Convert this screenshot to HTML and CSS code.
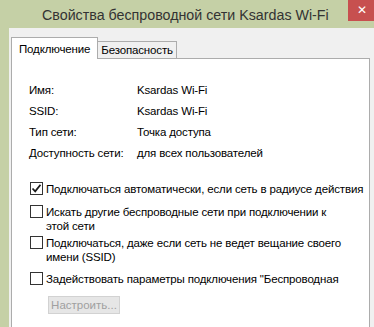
FILE: index.html
```html
<!DOCTYPE html>
<html lang="ru">
<head>
  <meta charset="UTF-8">
  <meta name="viewport" content="width=device-width, initial-scale=1.0">
  <title>Свойства беспроводной сети Ksardas Wi-Fi</title>
  <link rel="stylesheet" href="styles.css">
</head>
<body>
  <div class="window">
    <div class="titlebar">
      <span class="title">Свойства беспроводной сети Ksardas Wi-Fi</span>
      <span class="close">&#x2715;</span>
    </div>
    <div class="client">
      <div class="tabs">
        <div class="tab active">Подключение</div>
        <div class="tab">Безопасность</div>
      </div>
      <div class="panel">
        <div class="info">
          <span>Имя:</span><span>Ksardas Wi-Fi</span>
          <span>SSID:</span><span>Ksardas Wi-Fi</span>
          <span>Тип сети:</span><span>Точка доступа</span>
          <span>Доступность сети:</span><span>для всех пользователей</span>
        </div>

        <div class="check row1">
          <span class="box">
            <svg width="11" height="11" viewBox="0 0 11 11"><path d="M1.5 5.5 L4.2 8.3 L9.5 1.8" fill="none" stroke="#1a1a1a" stroke-width="1.8"/></svg>
          </span>
          <span class="label">Подключаться автоматически, если сеть в радиусе действия</span>
        </div>
        <div class="check row2">
          <span class="box"></span>
          <span class="label">Искать другие беспроводные сети при подключении к<br>этой сети</span>
        </div>
        <div class="check row3">
          <span class="box"></span>
          <span class="label">Подключаться, даже если сеть не ведет вещание своего<br>имени (SSID)</span>
        </div>
        <div class="check row4">
          <span class="box"></span>
          <span class="label">Задействовать параметры подключения "Беспроводная</span>
        </div>
        <button type="button" class="setup" disabled>Настроить...</button>
      </div>
    </div>
  </div>
</body>
</html>
```

FILE: styles.css
```css
body {
  margin: 0;
  padding: 0;
  background-color: #c5d0a6;
  font-family: "Liberation Sans", Arial, sans-serif;
  font-size: 11.5px;
  letter-spacing: -0.15px;
  color: #000;
  overflow: hidden;
}

.window {
  width: 374px;
  height: 327px;
  display: flex;
  flex-direction: column;
}

.titlebar {
  height: 28px;
  display: flex;
  align-items: flex-start;
}

.title {
  padding-left: 42px;
  padding-top: 5px;
  font-size: 14.25px;
  letter-spacing: 0;
  line-height: 20px;
  color: #333;
}

.close {
  margin-left: auto;
  width: 26px;
  height: 21px;
  background-color: #c7504f;
  color: #fff;
  font-size: 12px;
  line-height: 21px;
  text-align: center;
  padding-left: 2px;
  box-sizing: border-box;
}

.client {
  flex: 1;
  margin-left: 9px;
  background-color: #f0f0f0;
  padding: 9px 0 0 2px;
  display: flex;
  flex-direction: column;
}

.tabs {
  display: flex;
  align-items: flex-end;
}

.tab {
  height: 16px;
  line-height: 16px;
  padding: 0 3px;
  border: 1px solid #acacac;
  border-left: none;
  border-bottom: none;
  background-color: #f0f0f0;
}

.tab.active {
  height: 21px;
  line-height: 22px;
  padding: 0 7px;
  border-left: 1px solid #acacac;
  background-color: #fff;
  margin-bottom: -1px;
  position: relative;
  z-index: 1;
}

.panel {
  flex: 1;
  width: 359px;
  border: 1px solid #acacac;
  border-bottom: none;
  background-color: #fff;
  padding: 21px 0 0 17px;
  box-sizing: border-box;
}

.info {
  display: grid;
  grid-template-columns: 108px auto;
  line-height: 21px;
}

.check {
  display: flex;
  align-items: flex-start;
  gap: 3px;
  line-height: 14px;
  margin-left: 1px;
}

.row1 { margin-top: 18px; }
.row2 { margin-top: 9px; }
.row3 { margin-top: 3px; }
.row4 { margin-top: 8px; }

.box {
  width: 11px;
  height: 11px;
  border: 1px solid #333;
  background-color: #fff;
  flex-shrink: 0;
  display: flex;
  align-items: center;
  justify-content: center;
}

.label {
  white-space: nowrap;
}

.setup {
  display: block;
  margin: 10px 0 0 19px;
  width: 72px;
  height: 18px;
  padding: 0;
  font-family: "Liberation Sans", Arial, sans-serif;
  font-size: 11.5px;
  color: #a0a0a0;
  background-color: #e6e6e6;
  border: 1px solid #d2d2d2;
}
```
